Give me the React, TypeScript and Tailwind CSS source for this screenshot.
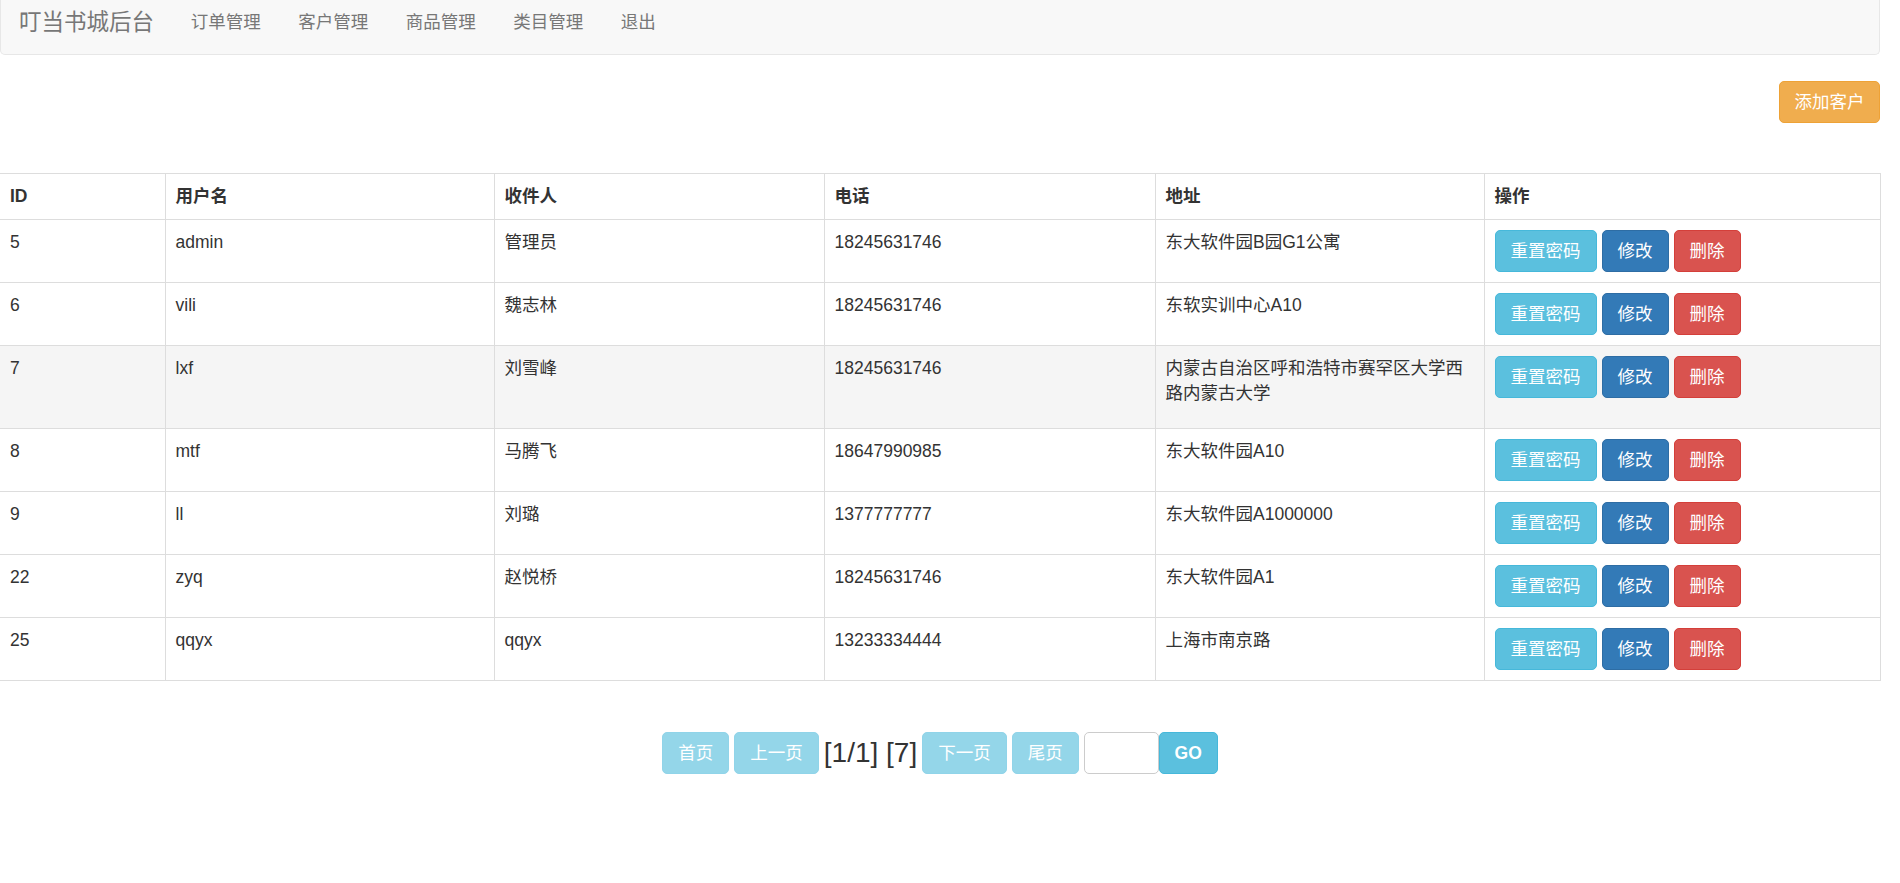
import React from "react";

type Customer = {
  id: number;
  username: string;
  receiver: string;
  phone: string;
  address: string;
  tall?: boolean;
  hover?: boolean;
};

const customers: Customer[] = [
  { id: 5, username: "admin", receiver: "管理员", phone: "18245631746", address: "东大软件园B园G1公寓" },
  { id: 6, username: "vili", receiver: "魏志林", phone: "18245631746", address: "东软实训中心A10" },
  {
    id: 7,
    username: "lxf",
    receiver: "刘雪峰",
    phone: "18245631746",
    address: "内蒙古自治区呼和浩特市赛罕区大学西路内蒙古大学",
    tall: true,
    hover: true,
  },
  { id: 8, username: "mtf", receiver: "马腾飞", phone: "18647990985", address: "东大软件园A10" },
  { id: 9, username: "ll", receiver: "刘璐", phone: "1377777777", address: "东大软件园A1000000" },
  { id: 22, username: "zyq", receiver: "赵悦桥", phone: "18245631746", address: "东大软件园A1" },
  { id: 25, username: "qqyx", receiver: "qqyx", phone: "13233334444", address: "上海市南京路" },
];

const navItems = ["订单管理", "客户管理", "商品管理", "类目管理", "退出"];

const font = { fontFamily: '"Liberation Sans", "Noto Sans CJK SC", sans-serif' };

function RowButtons() {
  return (
    <div className="flex gap-[5px]">
      <button className="h-[42px] px-[15px] rounded-[5px] border border-[#46b8da] bg-[#5bc0de] text-white text-[17.5px] leading-[25px]">
        重置密码
      </button>
      <button className="h-[42px] px-[15px] rounded-[5px] border border-[#2e6da4] bg-[#337ab7] text-white text-[17.5px] leading-[25px]">
        修改
      </button>
      <button className="h-[42px] px-[15px] rounded-[5px] border border-[#d43f3a] bg-[#d9534f] text-white text-[17.5px] leading-[25px]">
        删除
      </button>
    </div>
  );
}

export default function App() {
  const headers = ["ID", "用户名", "收件人", "电话", "地址", "操作"];
  return (
    <div className="w-[1880px] bg-white text-[#333] text-[17.5px] leading-[25px]" style={font}>
      {/* top navigation bar */}
      <nav className="h-[55px] flex items-start pt-[10px] bg-[#f8f8f8] border-x border-b border-[#e7e7e7] rounded-b-[5px]">
        <span className="pl-[18px] pr-[18px] text-[22.5px] text-[#777] leading-[25px]">叮当书城后台</span>
        {navItems.map((item) => (
          <a key={item} className="px-[18.75px] text-[#777] text-[17.5px] leading-[25px]">
            {item}
          </a>
        ))}
      </nav>

      {/* toolbar */}
      <div className="flex justify-end mt-[26px]">
        <button className="h-[42px] w-[101px] rounded-[5px] border border-[#eea236] bg-[#f0ad4e] text-white text-[17.5px]">
          添加客户
        </button>
      </div>

      {/* customer table */}
      <table className="mt-[50px] w-[1880px] table-fixed border-collapse">
        <colgroup>
          <col className="w-[165px]" />
          <col className="w-[329px]" />
          <col className="w-[330px]" />
          <col className="w-[331px]" />
          <col className="w-[329px]" />
          <col className="w-[396px]" />
        </colgroup>
        <thead>
          <tr className="h-[46px]">
            {headers.map((h, i) => (
              <th
                key={h}
                className={`border border-[#ddd] px-[10px] text-left font-bold align-middle ${i === 0 ? "border-l-0" : ""}`}
              >
                {h}
              </th>
            ))}
          </tr>
        </thead>
        <tbody>
          {customers.map((c) => {
            const cell = `border border-[#ddd] px-[10px] pt-[10px] align-top`;
            return (
              <tr key={c.id} className={`${c.tall ? "h-[83px]" : "h-[63px]"} ${c.hover ? "bg-[#f5f5f5]" : ""}`}>
                <td className={`${cell} border-l-0`}>{c.id}</td>
                <td className={cell}>{c.username}</td>
                <td className={cell}>{c.receiver}</td>
                <td className={cell}>{c.phone}</td>
                <td className={cell}>{c.address}</td>
                <td className={cell}>
                  <RowButtons />
                </td>
              </tr>
            );
          })}
        </tbody>
      </table>

      {/* pagination */}
      <div className="mt-[51px] flex justify-center items-center">
        <div className="flex items-center gap-[5px]">
          <button className="h-[42px] px-[15px] rounded-[5px] border border-[#90d4e9] bg-[#94d6e9] text-white">首页</button>
          <button className="h-[42px] px-[15px] rounded-[5px] border border-[#90d4e9] bg-[#94d6e9] text-white">上一页</button>
          <span className="text-[28px] leading-[30px] text-[#333]">[1/1] [7]</span>
          <button className="h-[42px] px-[15px] rounded-[5px] border border-[#90d4e9] bg-[#94d6e9] text-white">下一页</button>
          <button className="h-[42px] px-[15px] rounded-[5px] border border-[#90d4e9] bg-[#94d6e9] text-white">尾页</button>
          <div className="flex">
            <input className="h-[42px] w-[75px] rounded-[5px] border border-[#ccc] bg-white outline-none" />
            <button className="h-[42px] w-[59px] rounded-[5px] border border-[#46b8da] bg-[#5bc0de] text-white font-bold">
              GO
            </button>
          </div>
        </div>
      </div>
      <div className="h-[100px]" />
    </div>
  );
}
